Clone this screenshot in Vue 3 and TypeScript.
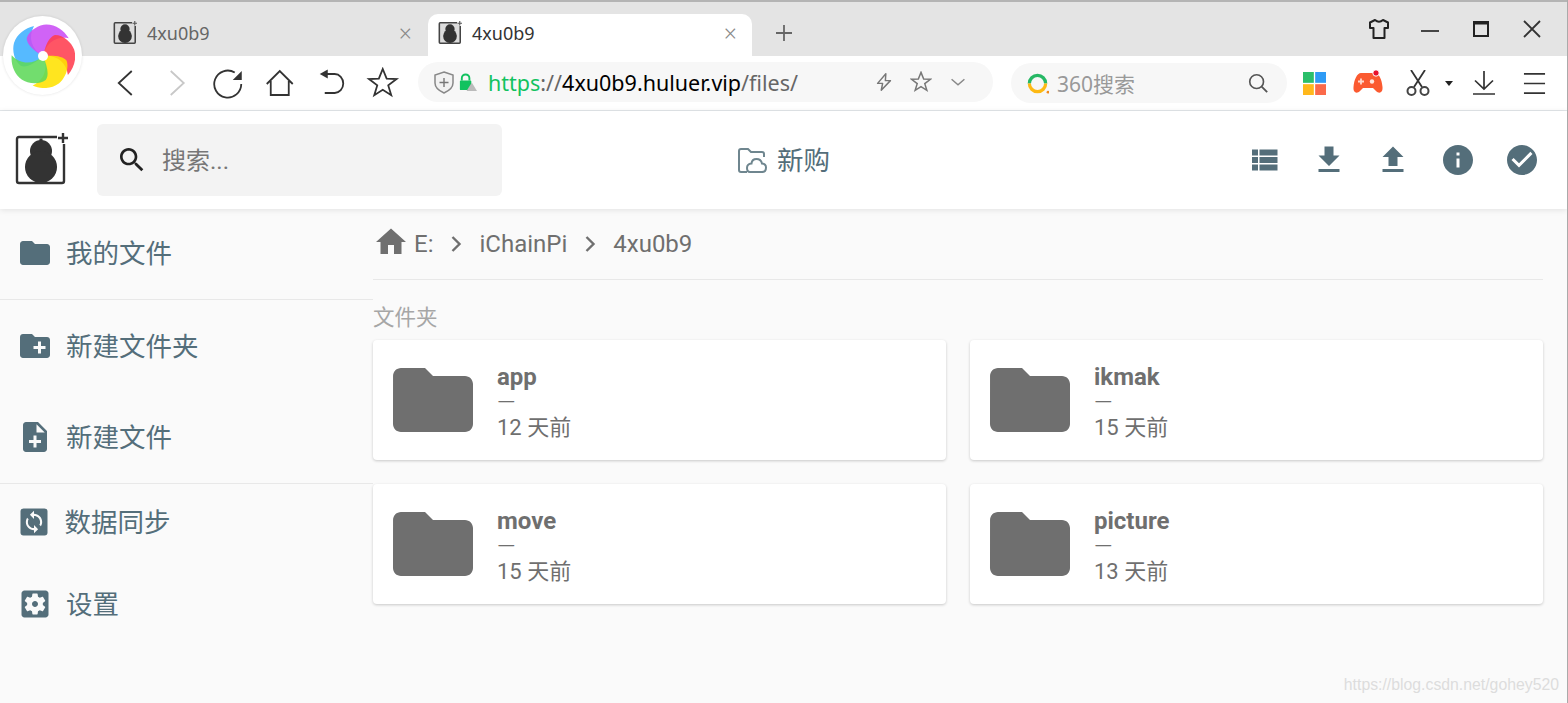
<script setup lang="ts">
interface Folder {
  name: string;
  age: string;
}

interface HeaderAction {
  name: string;
  d: string;
}

const folderPath = 'M10 4H4c-1.1 0-1.99.9-1.99 2L2 18c0 1.1.9 2 2 2h16c1.1 0 2-.9 2-2V8c0-1.1-.9-2-2-2h-8l-2-2z';
const searchPath = 'M15.5 14h-.79l-.28-.27C15.41 12.59 16 11.11 16 9.5 16 5.91 13.09 3 9.5 3S3 5.91 3 9.5 5.91 16 9.5 16c1.61 0 3.09-.59 4.23-1.57l.27.28v.79l5 4.99L20.49 19l-4.99-5zm-6 0C7.01 14 5 11.99 5 9.5S7.01 5 9.5 5 14 7.01 14 9.5 11.99 14 9.5 14z';
const starPoints = '16,2 19.9,11.6 29.8,12 21.5,18.4 24.5,28.2 16,22.8 7.5,28.2 10.5,18.4 2.2,12 12.1,11.6';

const folders: Folder[] = [
  { name: 'app', age: '12 天前' },
  { name: 'ikmak', age: '15 天前' },
  { name: 'move', age: '15 天前' },
  { name: 'picture', age: '13 天前' },
];

const headerActions: HeaderAction[] = [
  { name: 'list', d: 'M4 14h4v-4H4v4zm0 5h4v-4H4v4zM4 9h4V5H4v4zm5 5h12v-4H9v4zm0 5h12v-4H9v4zM9 5v4h12V5H9z' },
  { name: 'download', d: 'M19 9h-4V3H9v6H5l7 7 7-7zM5 18v2h14v-2H5z' },
  { name: 'upload', d: 'M9 16h6v-6h4l-7-7-7 7h4zm-4 2h14v2H5z' },
  { name: 'info', d: 'M12 2C6.48 2 2 6.48 2 12s4.48 10 10 10 10-4.48 10-10S17.52 2 12 2zm1 15h-2v-6h2v6zm0-8h-2V7h2v2z' },
  { name: 'select', d: 'M12 2C6.48 2 2 6.48 2 12s4.48 10 10 10 10-4.48 10-10S17.52 2 12 2zm-2 15l-5-5 1.41-1.41L10 14.17l7.59-7.59L19 8l-9 9z' },
];

// painted in this order, each one lies over the one before it
const blades: { color: string; angle: number }[] = [
  { color: '#3fb0ff', angle: 0 },
  { color: '#c94df5', angle: 72 },
  { color: '#ff3d50', angle: 144 },
  { color: '#ffe100', angle: 216 },
  { color: '#5fd85a', angle: 288 },
];
</script>

<template>
  <div class="page">
    <!-- browser tab strip -->
    <div class="tabstrip">
      <div class="tab">
        <svg class="favicon" viewBox="0 0 54 54">
          <rect x="3" y="5" width="46" height="45" fill="#dcdcdc" />
          <path d="M43 4H5Q3 4 3 6V48Q3 50 5 50H48Q50 50 50 48V11" fill="none" stroke="#444" stroke-width="3.500" />
          <circle cx="27" cy="18" r="10.500" fill="#333" />
          <circle cx="27" cy="34" r="15.500" fill="#333" />
          <path d="M44 5H54M49 0V10" stroke="#555" stroke-width="2.500" />
        </svg>
        <span class="tab-title">4xu0b9</span>
        <span class="tab-close">×</span>
      </div>
      <div class="tab active">
        <svg class="favicon" viewBox="0 0 54 54">
          <rect x="3" y="5" width="46" height="45" fill="#dcdcdc" />
          <path d="M43 4H5Q3 4 3 6V48Q3 50 5 50H48Q50 50 50 48V11" fill="none" stroke="#444" stroke-width="3.500" />
          <circle cx="27" cy="18" r="10.500" fill="#333" />
          <circle cx="27" cy="34" r="15.500" fill="#333" />
          <path d="M44 5H54M49 0V10" stroke="#555" stroke-width="2.500" />
        </svg>
        <span class="tab-title">4xu0b9</span>
        <span class="tab-close">×</span>
      </div>
      <svg class="new-tab" viewBox="0 0 20 20"><path d="M10 2v16M2 10h16" stroke="#666" stroke-width="1.800" /></svg>
      <div class="window-btns">
        <svg viewBox="0 0 24 24"><path d="M8 3L3 5.500V11H6.500V21H17.500V11H21V5.500L16 3Q12 6.500 8 3Z" fill="none" stroke="#222" stroke-width="2" stroke-linejoin="round" /></svg>
        <svg viewBox="0 0 24 24"><path d="M3 14H21" stroke="#333" stroke-width="1.800" /></svg>
        <svg viewBox="0 0 24 24"><rect x="5" y="5" width="14" height="14" fill="none" stroke="#222" stroke-width="2" /><path d="M5 6H19" stroke="#222" stroke-width="3" /></svg>
        <svg viewBox="0 0 24 24"><path d="M4 4L20 20M20 4L4 20" stroke="#333" stroke-width="1.800" /></svg>
      </div>
    </div>

    <!-- browser toolbar -->
    <div class="toolbar">
      <div class="nav-btns">
        <svg viewBox="0 0 32 32"><path d="M23 4L10 16L23 28" class="line" /></svg>
        <svg viewBox="0 0 32 32"><path d="M10 4L23 16L10 28" class="line faded" /></svg>
        <svg viewBox="0 0 32 32"><path d="M23 5.500A13.500 13.500 0 1 0 29.500 17" class="line" /><path d="M30 4V13H21Z" fill="#333" /></svg>
        <svg viewBox="0 0 32 32"><path d="M3 17L16 4L29 17M7 14V28H25V14" class="line" /></svg>
        <svg viewBox="0 0 32 32"><path d="M12 7H20A8.500 9.500 0 0 1 20 26H10" class="line" /><path d="M5 7L13 2.500V11.500Z" fill="#333" /></svg>
        <svg viewBox="0 0 32 32"><polygon :points="starPoints" class="line" /></svg>
      </div>
      <div class="address">
        <svg class="shield" viewBox="0 0 24 24">
          <path d="M12 2L21 5V13Q21 19 12 23Q3 19 3 13V5Z" fill="#f2f2f2" stroke="#888" stroke-width="1.500" />
          <path d="M12 8V17M7.500 12.500H16.500" stroke="#777" stroke-width="1.400" />
        </svg>
        <svg class="lock" viewBox="0 0 20 20">
          <path d="M4 8V5.500A4 4 0 0 1 12 5.500V8" fill="none" stroke="#12c25f" stroke-width="2" />
          <rect x="2" y="8" width="12" height="10" rx="1" fill="#12c25f" />
          <path d="M14.500 10L20 19H9Z" fill="#bbb" />
        </svg>
        <span class="url"><span class="url-scheme">https</span><span class="url-dim">://</span><span class="url-host">4xu0b9.huluer.vip</span><span class="url-dim">/files/</span></span>
        <div class="address-icons">
          <svg viewBox="0 0 24 24"><path d="M14 3L5 13.500H10.500L9 21L19 10.500H13.500Z" fill="none" stroke="#777" stroke-width="1.600" stroke-linejoin="round" /></svg>
          <svg viewBox="0 0 32 32"><polygon :points="starPoints" fill="none" stroke="#777" stroke-width="2.200" /></svg>
          <svg viewBox="0 0 24 24"><path d="M5 9L12 15L19 9" fill="none" stroke="#888" stroke-width="1.600" /></svg>
        </div>
      </div>
      <div class="websearch">
        <svg class="so-logo" viewBox="0 0 24 24">
          <path d="M3.500 12A8.500 8.500 0 0 1 20.500 12" fill="none" stroke="#26b865" stroke-width="3.400" />
          <path d="M20.500 12A8.500 8.500 0 0 1 3.500 12" fill="none" stroke="#fdb913" stroke-width="3.400" />
          <circle cx="23" cy="21" r="1.500" fill="#f08a1d" />
        </svg>
        <span class="websearch-text">360搜索</span>
        <svg class="websearch-icon" viewBox="0 0 24 24"><circle cx="10.500" cy="10.500" r="7.500" fill="none" stroke="#555" stroke-width="1.800" /><path d="M16 16L22 22" stroke="#555" stroke-width="2" /></svg>
      </div>
      <div class="tools">
        <svg class="apps" viewBox="0 0 24 24">
          <rect x="0" y="0" width="11.300" height="11.300" fill="#2bbf6a" />
          <rect x="12.700" y="0" width="11.300" height="11.300" fill="#2e9bf5" />
          <rect x="0" y="12.700" width="11.300" height="11.300" fill="#ffb81c" />
          <rect x="12.700" y="12.700" width="11.300" height="11.300" fill="#fb6a4a" />
        </svg>
        <svg class="game" viewBox="0 0 30 24">
          <path d="M8 3H22C26 3 29 10 29.500 17C30 23 26 24 23 21L20 18H10L7 21C4 24 0 23 .5 17C1 10 4 3 8 3Z" fill="#fb5a30" />
          <path d="M5 11.500H11M8 8.500V14.500" stroke="#ffd8cc" stroke-width="1.800" />
          <circle cx="19" cy="11.500" r="2.200" fill="#ffe6de" />
          <circle cx="23" cy="3" r="3.200" fill="#e8112d" stroke="#fff" stroke-width="1" />
        </svg>
        <svg class="scissors" viewBox="0 0 24 26">
          <path d="M5 0L16 17M19 0L8 17" fill="none" stroke="#333" stroke-width="1.800" />
          <circle cx="5.500" cy="21" r="4" fill="none" stroke="#444" stroke-width="2" />
          <circle cx="18.500" cy="21" r="4" fill="none" stroke="#444" stroke-width="2" />
        </svg>
        <svg class="caret" viewBox="0 0 8 5"><path d="M0 0H8L4 5Z" fill="#222" /></svg>
        <svg class="dl" viewBox="0 0 24 24"><path d="M12 0V18M3 9.500L12 18L21 9.500M1 23H23" fill="none" stroke="#333" stroke-width="1.700" /></svg>
        <svg class="menu" viewBox="0 0 24 24"><path d="M1 2H23M1 12H23M1 22H23" stroke="#333" stroke-width="1.800" /></svg>
      </div>
    </div>

    <!-- app header -->
    <header class="app-header">
      <div class="header-left">
        <svg class="app-logo" viewBox="0 0 54 54">
          <path d="M43 4H5Q3 4 3 6V48Q3 50 5 50H48Q50 50 50 48V11" fill="none" stroke="#333" stroke-width="2.400" />
          <path d="M27 5.500V9" stroke="#333" stroke-width="3" />
          <circle cx="27" cy="18" r="11" fill="#333" />
          <circle cx="27" cy="34" r="16" fill="#333" />
          <path d="M44 5H54M49 0V10" stroke="#333" stroke-width="2.400" />
        </svg>
        <div class="search-box">
          <svg viewBox="0 0 24 24"><path :d="searchPath" fill="#222" /></svg>
          <span>搜索...</span>
        </div>
      </div>
      <div class="header-title">
        <svg viewBox="0 0 30 28">
          <path d="M2 24V5Q2 3 4 3H11L14 6H25Q27 6 27 8V11" fill="none" stroke="#6f868f" stroke-width="2" />
          <path d="M2 24Q2 26 4 26H10" fill="none" stroke="#6f868f" stroke-width="2" />
          <path d="M13 26H25Q29 26 29 21.500Q29 18 25 17.500Q24 13 19.500 13Q15 13 14.500 17.500Q10 18 10 22Q10 26 13 26Z" fill="none" stroke="#6f868f" stroke-width="2" />
        </svg>
        <span>新购</span>
      </div>
      <div class="header-actions">
        <svg v-for="action in headerActions" :key="action.name" viewBox="0 0 24 24"><path :d="action.d" fill="#546e7a" /></svg>
      </div>
    </header>

    <div class="content">
      <nav class="sidebar">
        <div class="side-group first">
          <div class="side-item">
            <svg viewBox="0 0 24 24"><path :d="folderPath" /></svg>
            <span>我的文件</span>
          </div>
        </div>
        <div class="side-group second">
          <div class="side-item">
            <svg viewBox="0 0 24 24"><path d="M20 6h-8l-2-2H4c-1.110 0-1.990.890-1.990 2L2 18c0 1.110.890 2 2 2h16c1.110 0 2-.890 2-2V8c0-1.110-.890-2-2-2zm-1 8h-3v3h-2v-3h-3v-2h3V9h2v3h3v2z" /></svg>
            <span>新建文件夹</span>
          </div>
          <div class="side-item">
            <svg viewBox="0 0 24 24"><path d="M14 2H6c-1.100 0-1.990.900-1.990 2L4 20c0 1.100.890 2 1.990 2H18c1.100 0 2-.900 2-2V8l-6-6zm2 14h-3v3h-2v-3H8v-2h3v-3h2v3h3v2zm-3-7V3.500L18.500 9H13z" /></svg>
            <span>新建文件</span>
          </div>
        </div>
        <div class="side-group last">
          <div class="side-item sync">
            <svg viewBox="0 0 24 24">
              <rect x="3" y="3" width="18" height="18" rx="2" />
              <g transform="translate(3.840 3.840) scale(.68)"><path d="M12 4V1L8 5l4 4V6c3.310 0 6 2.690 6 6 0 1.010-.250 1.970-.700 2.800l1.460 1.460C19.540 15.030 20 13.570 20 12c0-4.420-3.580-8-8-8zm0 14c-3.310 0-6-2.690-6-6 0-1.010.250-1.970.700-2.800L5.240 7.740C4.460 8.970 4 10.430 4 12c0 4.420 3.580 8 8 8v3l4-4-4-4v3z" fill="#fafafa" /></g>
            </svg>
            <span>数据同步</span>
          </div>
          <div class="side-item">
            <svg viewBox="0 0 24 24"><path d="M12 10c-1.100 0-2 .900-2 2s.900 2 2 2 2-.900 2-2-.900-2-2-2zm7-7H5c-1.110 0-2 .900-2 2v14c0 1.100.890 2 2 2h14c1.110 0 2-.900 2-2V5c0-1.100-.890-2-2-2zm-1.750 9c0 .230-.020.460-.050.680l1.480 1.160c.130.110.170.300.080.450l-1.400 2.420c-.090.150-.270.210-.430.150l-1.740-.700c-.360.280-.760.510-1.180.690l-.260 1.850c-.030.170-.180.300-.350.300h-2.800c-.170 0-.320-.130-.350-.290l-.260-1.850c-.430-.180-.820-.410-1.180-.690l-1.740.700c-.160.060-.340 0-.430-.150l-1.400-2.420c-.090-.150-.050-.340.080-.450l1.480-1.160c-.030-.230-.050-.460-.050-.690 0-.230.020-.460.050-.680l-1.480-1.160c-.130-.110-.170-.300-.080-.450l1.400-2.420c.090-.150.270-.210.430-.150l1.740.700c.360-.280.760-.510 1.180-.690l.260-1.850c.030-.170.180-.300.350-.300h2.800c.170 0 .320.130.350.290l.260 1.850c.430.180.820.410 1.180.690l1.740-.700c.160-.060.340 0 .430.150l1.400 2.420c.090.150.050.340-.080.450l-1.480 1.160c.030.230.050.460.050.690z" /></svg>
            <span>设置</span>
          </div>
        </div>
      </nav>

      <main class="main">
        <div class="breadcrumbs">
          <svg viewBox="0 0 24 24"><path d="M10 20v-6h4v6h5v-8h3L12 3 2 12h3v8z" fill="#6f6f6f" /></svg>
          <span>E:</span>
          <svg class="chevron" viewBox="0 0 12 18"><path d="M2.500 2L9.500 9L2.500 16" fill="none" stroke="#6f6f6f" stroke-width="2.400" /></svg>
          <span>iChainPi</span>
          <svg class="chevron" viewBox="0 0 12 18"><path d="M2.500 2L9.500 9L2.500 16" fill="none" stroke="#6f6f6f" stroke-width="2.400" /></svg>
          <span>4xu0b9</span>
        </div>
        <div class="section-title">文件夹</div>
        <div class="folder-grid">
          <div v-for="folder in folders" :key="folder.name" class="folder-card">
            <svg viewBox="0 0 24 24"><path :d="folderPath" fill="#6f6f6f" /></svg>
            <div class="folder-info">
              <div class="folder-name">{{ folder.name }}</div>
              <div class="folder-size">—</div>
              <div class="folder-age">{{ folder.age }}</div>
            </div>
          </div>
        </div>
      </main>
    </div>

    <!-- browser logo sits over tab strip and toolbar -->
    <div class="browser-logo">
      <svg viewBox="-32 -32 64 64">
        <path
          v-for="blade in blades"
          :key="blade.color"
          d="M0 0C-8 7 -16 12 -22 10C-29 5 -31 -6 -29 -13C-26 -22 -18 -28 -9 -30C-15 -19 -12 -7 0 0Z"
          :fill="blade.color"
          fill-opacity="0.88"
          :transform="`rotate(${blade.angle})`"
        />
        <circle r="5" fill="#fff" />
      </svg>
    </div>

    <div class="watermark">https://blog.csdn.net/gohey520</div>
  </div>
</template>

<style>
html,
body {
  margin: 0;
  overflow: hidden;
}
</style>

<style scoped>
.page {
  position: relative;
  display: flex;
  flex-direction: column;
  width: 1568px;
  height: 703px;
  box-sizing: border-box;
  border-right: 1px solid #aaa;
  overflow: hidden;
  background: #fafafa;
  font-family: Roboto, "Noto Sans CJK SC", sans-serif;
}

.tabstrip {
  display: flex;
  align-items: flex-end;
  flex: none;
  height: 56px;
  box-sizing: border-box;
  padding-left: 100px;
  border-top: 2px solid #b4b4b4;
  background: #e4e4e4;
}

.tab {
  display: flex;
  align-items: center;
  width: 327px;
  height: 42px;
  box-sizing: border-box;
  padding: 0 15px 4px 13px;
  font-family: "Noto Sans", "Noto Sans CJK SC", sans-serif;
  font-size: 18px;
  color: #666;
}

.tab.active {
  width: 324px;
  margin-left: 1px;
  padding-left: 10px;
  border-radius: 10px 10px 0 0;
  background: #fff;
  color: #333;
}

.favicon {
  width: 24px;
  height: 24px;
}

.tab-title {
  flex: 1;
  margin-left: 10px;
}

.tab-close {
  font-size: 23px;
  font-weight: 300;
  color: #888;
}

.new-tab {
  align-self: center;
  width: 20px;
  height: 20px;
  margin: 8px 0 0 22px;
}

.window-btns {
  display: flex;
  gap: 27px;
  align-self: center;
  margin: 0 23px 0 auto;
}

.window-btns svg {
  width: 24px;
  height: 24px;
}

.toolbar {
  display: flex;
  align-items: center;
  flex: none;
  height: 55px;
  box-sizing: border-box;
  padding-left: 99px;
  border-bottom: 1px solid #e3e7ea;
  background: #fff;
}

.nav-btns {
  display: flex;
  flex: none;
  width: 309px;
  margin-right: 10px;
}

.nav-btns svg {
  flex: 1;
  height: 32px;
}

.line {
  fill: none;
  stroke: #333;
  stroke-width: 1.800;
}

.faded {
  stroke: #c8c8c8;
}

.address {
  display: flex;
  align-items: center;
  flex: none;
  align-self: flex-start;
  width: 575px;
  height: 40px;
  box-sizing: border-box;
  margin-top: 6px;
  padding-left: 14px;
  border-radius: 20px;
  background: #f7f7f7;
}

.shield {
  width: 24px;
  height: 24px;
}

.lock {
  width: 19px;
  height: 19px;
  margin-left: 2px;
}

.url {
  margin-left: 11px;
  font-family: "Noto Sans", sans-serif;
  font-size: 21.500px;
  white-space: nowrap;
}

.url-scheme {
  color: #12c25f;
}

.url-dim {
  color: #666;
}

.url-host {
  color: #000;
}

.address-icons {
  display: flex;
  align-items: center;
  gap: 15px;
  margin: 0 24px 0 auto;
}

.address-icons svg {
  width: 22px;
  height: 22px;
}

.websearch {
  display: flex;
  align-items: center;
  flex: none;
  width: 276px;
  height: 40px;
  box-sizing: border-box;
  margin-left: 18px;
  padding: 0 18px 0 15px;
  border-radius: 20px;
  background: #f7f7f7;
}

.so-logo {
  width: 23px;
  height: 23px;
}

.websearch-text {
  flex: 1;
  margin-left: 8px;
  font-family: "Noto Sans", "Noto Sans CJK SC", sans-serif;
  font-size: 21px;
  color: #999;
}

.websearch-icon {
  width: 22px;
  height: 22px;
}

.tools {
  display: flex;
  align-items: center;
  margin-left: 16px;
}

.apps {
  width: 23px;
  height: 23px;
}

.game {
  width: 30px;
  height: 24px;
  margin: -2px 0 0 27px;
}

.scissors {
  width: 24px;
  height: 26px;
  margin-left: 23px;
}

.caret {
  width: 8px;
  height: 5px;
  margin-left: 15px;
}

.dl {
  width: 24px;
  height: 24px;
  margin-left: 19px;
}

.menu {
  width: 23px;
  height: 23px;
  margin-left: 27px;
}

.app-header {
  position: relative;
  z-index: 2;
  display: grid;
  grid-template-columns: 1fr auto 1fr;
  align-items: center;
  flex: none;
  height: 98px;
  background: #fff;
  box-shadow: 0 1px 6px rgba(0, 0, 0, 0.1);
}

.header-left {
  display: flex;
  align-items: center;
}

.app-logo {
  width: 54px;
  height: 54px;
  margin: 0 29px 0 14px;
  flex: none;
}

.search-box {
  display: flex;
  align-items: center;
  width: 405px;
  height: 72px;
  box-sizing: border-box;
  padding-left: 19px;
  border-radius: 6px;
  background: #f3f3f3;
  font-size: 24px;
  color: #777;
}

.search-box svg {
  width: 32px;
  height: 32px;
  margin-right: 14px;
}

.search-box span {
  padding-bottom: 4px;
}

.header-title {
  display: flex;
  align-items: center;
  gap: 10px;
  font-size: 26.500px;
  color: #546e7a;
}

.header-title span {
  padding-bottom: 4px;
}

.header-title svg {
  width: 30px;
  height: 28px;
}

.header-actions {
  display: flex;
  justify-content: flex-end;
  gap: 28.500px;
  padding-right: 27px;
}

.header-actions svg {
  width: 36px;
  height: 36px;
}

.content {
  display: flex;
  flex: 1;
  min-height: 0;
}

.sidebar {
  flex: none;
  width: 373px;
}

.side-group {
  border-bottom: 1px solid #e8e8e8;
}

.side-group.second {
  padding-bottom: 1px;
}

.side-group.last {
  display: flex;
  flex-direction: column;
  gap: 6px;
  border-bottom: none;
}

.side-group.first .side-item {
  height: 90px;
  padding-bottom: 2px;
}

.side-group.last .side-item {
  height: 76px;
}

.side-item {
  display: flex;
  align-items: center;
  gap: 13px;
  height: 91px;
  box-sizing: border-box;
  padding-left: 17px;
  font-size: 26.500px;
  color: #546e7a;
}

.side-item span {
  padding-bottom: 3px;
}

.side-item svg {
  width: 36px;
  height: 36px;
  fill: #546e7a;
}

.side-item.sync {
  padding-left: 15.500px;
}

.main {
  flex: 1;
  min-width: 0;
  padding-right: 24px;
}

.breadcrumbs {
  display: flex;
  align-items: center;
  height: 71px;
  box-sizing: border-box;
  border-bottom: 1px solid #e8e8e8;
  font-size: 24px;
  color: #6f6f6f;
}

.breadcrumbs > svg:first-child {
  width: 36px;
  height: 36px;
  margin: -4px 5px 0 0;
}

.chevron {
  width: 12px;
  height: 18px;
  margin: 0 17px;
}

.section-title {
  height: 60px;
  line-height: 75px;
  font-size: 21.500px;
  color: #a6a6a6;
}

.folder-grid {
  display: grid;
  grid-template-columns: 573px 573px;
  grid-auto-rows: 120px;
  gap: 24px;
}

.folder-card {
  display: flex;
  align-items: center;
  gap: 16px;
  padding-left: 12px;
  border-radius: 4px;
  background: #fff;
  box-shadow: 0 1px 3px rgba(0, 0, 0, 0.2);
}

.folder-card svg {
  width: 96px;
  height: 96px;
  flex: none;
}

.folder-info {
  margin-top: 5px;
  color: #6f6f6f;
}

.folder-name {
  height: 29px;
  line-height: 28px;
  font-size: 24px;
  font-weight: 700;
}

.folder-size {
  height: 22px;
  line-height: 20px;
  font-size: 24px;
  font-weight: 300;
}

.folder-age {
  height: 28px;
  line-height: 28px;
  font-size: 22px;
}

.browser-logo {
  position: absolute;
  left: 3px;
  top: 16px;
  z-index: 3;
  display: flex;
  align-items: center;
  justify-content: center;
  width: 79px;
  height: 79px;
  border-radius: 50%;
  background: #fff;
  box-shadow: 0 0 3px rgba(0, 0, 0, 0.12);
}

.browser-logo svg {
  width: 64px;
  height: 64px;
}

.watermark {
  position: absolute;
  right: 8px;
  bottom: 9px;
  font-family: "Liberation Sans", sans-serif;
  font-size: 15.800px;
  color: #ddd;
}
</style>
